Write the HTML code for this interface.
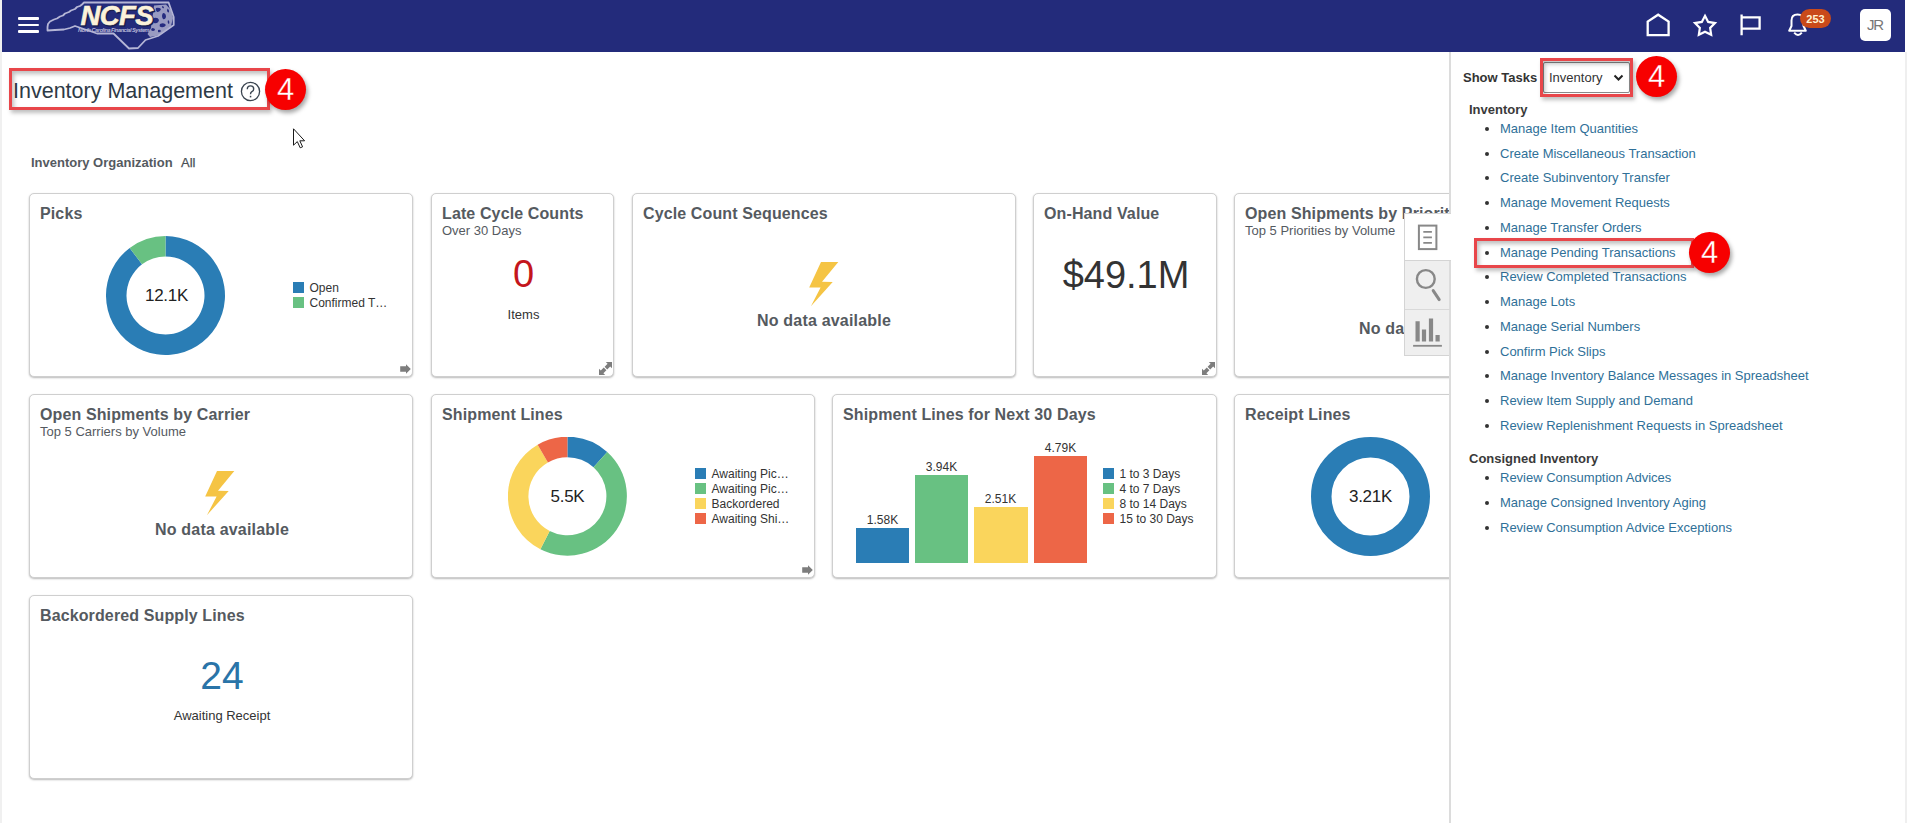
<!DOCTYPE html>
<html><head><meta charset="utf-8">
<style>
*{box-sizing:border-box;margin:0;padding:0}
html,body{width:1907px;height:823px;overflow:hidden;background:#fff;font-family:"Liberation Sans",sans-serif;color:#333}
.abs{position:absolute}
#lstrip{left:0;top:0;width:2px;height:823px;background:#f0f0f0}
#hdr{left:2px;top:0;width:1903px;height:52px;background:#232b7b}
.card{position:absolute;background:#fff;border:1px solid #cfcfcf;border-radius:5px;box-shadow:0 1px 2px rgba(0,0,0,.28)}
.ttl{position:absolute;left:10px;top:11px;font-size:16px;font-weight:bold;color:#555a5f;white-space:nowrap;letter-spacing:0.12px}
.sub{position:absolute;left:10px;top:29px;font-size:13px;color:#555a5f;white-space:nowrap}
.nodata{position:absolute;font-size:16px;font-weight:bold;color:#555a5f;white-space:nowrap;letter-spacing:0.2px}
.leg{position:absolute;font-size:12px;color:#333;white-space:nowrap;line-height:15px}
.leg i{display:inline-block;width:11px;height:11px;vertical-align:-1px;margin-right:5.5px}
.redbox{position:absolute;border:3px solid #e8464a;box-shadow:inset 2px 3px 4px rgba(0,0,0,.25),2px 3px 4px rgba(0,0,0,.25)}
.badge4{position:absolute;width:41px;height:41px;border-radius:50%;background:#f70000;color:#fff;font-size:31px;-webkit-text-stroke:0.3px #f70000;text-align:center;line-height:41px;box-shadow:2px 3px 4px rgba(0,0,0,.35)}
#panel{left:1449px;top:52px;width:458px;height:771px;background:#fff;border-left:2px solid #dcdcdc;border-right:2px solid #efefef}
.lnk{position:absolute;left:1500px;font-size:13px;color:#2f7098;white-space:nowrap}
.bul{position:absolute;left:1485px;width:4px;height:4px;border-radius:50%;background:#333}
.grp{position:absolute;left:1469px;font-size:13px;font-weight:bold;color:#3a3a3a;white-space:nowrap}
</style></head>
<body>
<div id="lstrip" class="abs"></div>
<div id="hdr" class="abs"></div>

<!-- header content -->
<div class="abs" style="left:17.5px;top:17px;width:21px;height:2.8px;background:#fff;border-radius:1px"></div>
<div class="abs" style="left:17.5px;top:23.7px;width:21px;height:2.6px;background:#fff;border-radius:1px"></div>
<div class="abs" style="left:17.5px;top:30px;width:21px;height:2.8px;background:#fff;border-radius:1px"></div>
<svg class="abs" style="left:40px;top:0px" width="140" height="52" viewBox="0 0 140 52">
  <path d="M44 2.5 L128.6 2.5 L133.7 17 L133.7 25 L118 36 L105.5 40 L98 48 L89 48.5 L73.5 33.5 L57 33.5 L35 26 L30 28 L24 29.5 L15 30 L7.5 30.5 L7.5 27 L8 24 L10 21.5 L14 19.5 L17 18.5 L20 16.5 L23 15.5 L25 13.5 L29 12 L31 10.5 L35 9 L37 7 L40 6 L42 4.5 Z" fill="none" stroke="#b5b6d6" stroke-width="1.8" stroke-linejoin="round"/>
  <path d="M114 5.5 L126 4.5 L131 10 L133 18 L131 26 L125 31 L118 35.5 L110 37 L107.5 34 L111 28 L111.5 21 L113 14 Z" fill="#aeafcf" opacity="0.85"/>
  <g fill="#262c80">
    <path d="M116 8 q3 -1 5 1 q-1 3 -4 3 q-2 -2 -1 -4Z"/><path d="M123 13 q3 0 3 4 q-1 3 -3 2 q-2 -3 0 -6Z"/><path d="M114 18 q4 -1 5 2 q-1 4 -5 3 q-2 -3 0 -5Z"/>
    <path d="M120 24 q4 -2 6 1 q-2 3 -5 2 q-2 0 -1 -3Z"/><path d="M112 28 q3 0 3 2 q-2 2 -4 0Z"/><path d="M127.5 8.5 q2 1 1.5 4 q-2 0 -2 -2Z"/>
    <path d="M128 20 q2 1 1 4 q-2 -1 -1 -4Z"/><path d="M118 30 q2 -1 3 1 q-1 2 -3 1Z"/><path d="M122 6 q2 0 2 2 q-2 1 -2 -2Z"/>
  </g>
  <g font-family="Liberation Sans" font-weight="bold" font-style="italic" font-size="27.5" letter-spacing="-0.6">
  <text x="40.5" y="25" fill="#1c2050" stroke="#1c2050" stroke-width="1.4" transform="translate(1.2,1.2)">NCFS</text>
  <text x="40.5" y="25" fill="#fbf2da" stroke="#fbf2da" stroke-width="0.6">NCFS</text>
  </g>
  <text x="38" y="31.6" font-family="Liberation Sans" font-weight="bold" font-style="italic" font-size="5.6" fill="#b9bad9" textLength="71.5">North Carolina Financial System</text>
</svg>
<!-- right icons -->
<svg class="abs" style="left:1640px;top:8px" width="180" height="36" viewBox="0 0 180 36">
  <path d="M7.7 27.2 L7.7 13.5 L18.15 6.7 L28.6 13.5 L28.6 27.2 Z" fill="none" stroke="#fff" stroke-width="2.3" stroke-linejoin="miter"/>
  <path d="M65.00 7.80 L68.17 13.93 L74.99 15.06 L70.14 19.97 L71.17 26.79 L65.00 23.70 L58.83 26.79 L59.86 19.97 L55.01 15.06 L61.83 13.93 Z" fill="none" stroke="#fff" stroke-width="2.2" stroke-linejoin="miter"/>
  <path d="M101.6 27.3 L101.6 6.5 M101.6 9.3 L119.6 9.3 L119.6 20.7 L101.6 20.7" fill="none" stroke="#fff" stroke-width="2.3"/>
  <path d="M149.2 22.8 L151.5 18 L151.5 12.5 Q151.5 6.4 157.5 6.4 Q163.5 6.4 163.5 12.5 L163.5 18 L165.8 22.8 Z" fill="none" stroke="#fff" stroke-width="2" stroke-linejoin="round"/>
  <path d="M154.2 24.6 Q158 29.2 161.8 24.6" fill="none" stroke="#fff" stroke-width="2"/>
</svg>
<div class="abs" style="left:1800px;top:9px;width:31px;height:19px;border-radius:10px;background:#c94a1a;color:#fff3d2;font-size:11px;font-weight:bold;text-align:center;line-height:20px">253</div>
<div class="abs" style="left:1860px;top:9px;width:31px;height:32px;border-radius:5px;background:#fff;color:#777;font-size:15px;letter-spacing:-1.2px;text-indent:-1px;text-align:center;line-height:31px">JR</div>

<!-- title -->
<div class="abs" style="left:13px;top:79px;font-size:21.5px;color:#2e3a46;white-space:nowrap">Inventory Management</div>
<svg class="abs" style="left:240px;top:81px" width="21" height="21" viewBox="0 0 21 21"><circle cx="10.5" cy="10.5" r="9.1" fill="none" stroke="#3a4450" stroke-width="1.3"/><path d="M7.3 8.2 Q7.3 4.9 10.5 4.9 Q13.7 4.9 13.7 7.9 Q13.7 9.6 11.9 10.6 Q10.5 11.4 10.5 13.2" fill="none" stroke="#3a4450" stroke-width="1.4"/><rect x="9.8" y="14.8" width="1.5" height="1.6" fill="#3a4450"/></svg>
<div class="redbox" style="left:9px;top:68px;width:261px;height:42px"></div>
<div class="badge4" style="left:265px;top:69px">4</div>
<svg class="abs" style="left:292px;top:128px" width="14" height="22" viewBox="0 0 14 22"><path d="M1.5 0.8 L1.5 17.2 L5.3 13.6 L8.2 19.8 L10.6 18.8 L7.8 12.8 L12.6 12.8 Z" fill="#fff" stroke="#1a1a1a" stroke-width="1" stroke-linejoin="miter"/></svg>

<div class="abs" style="left:31px;top:155px;font-size:13px;font-weight:bold;color:#555a5f;white-space:nowrap">Inventory Organization</div>
<div class="abs" style="left:181px;top:155px;font-size:13px;color:#4a4f55;-webkit-text-stroke:0.25px #4a4f55">All</div>

<div class="card" style="left:29px;top:193px;width:384px;height:184px">
<div class="ttl">Picks</div>
<svg class="abs" style="left:76px;top:42px" width="120" height="120" viewBox="76 42 120 120"><path d="M135.50 42.00 A59.5 59.5 0 1 1 99.69 53.98 L112.03 70.35 A39 39 0 1 0 135.50 62.50 Z" fill="#2a7db5"/><path d="M99.69 53.98 A59.5 59.5 0 0 1 135.50 42.00 L135.50 62.50 A39 39 0 0 0 112.03 70.35 Z" fill="#68c182"/></svg>
<div class="abs" style="left:106px;top:92px;width:61px;text-align:center;font-size:17px;letter-spacing:-0.3px;color:#222">12.1K</div>
<div class="leg" style="left:263px;top:87px"><i style="background:#2a7db5"></i>Open<br><i style="background:#68c182"></i>Confirmed T…</div>
<svg class="abs" style="right:1px;bottom:2px" width="11" height="10" viewBox="0 0 11 10"><path d="M0.2 2.2 L6 2.2 L6 0.2 L10.8 5 L6 9.8 L6 7.8 L0.2 7.8 Z" fill="#7d7d7d"/></svg>
</div>
<div class="card" style="left:431px;top:193px;width:183px;height:184px">
<div class="ttl">Late Cycle Counts</div>
<div class="sub">Over 30 Days</div>
<div class="abs" style="left:0;top:59px;width:183px;text-align:center;font-size:38px;color:#c4161c">0</div>
<div class="abs" style="left:0;top:113px;width:183px;text-align:center;font-size:13px;color:#333">Items</div>
<svg class="abs" style="right:1px;bottom:1px" width="13" height="13" viewBox="0 0 13 13"><path d="M13 0 H6.8 L8.6 1.8 L5.6 4.8 L8.2 7.4 L11.2 4.4 L13 6.2 Z M0 13 H6.2 L4.4 11.2 L7.4 8.2 L4.8 5.6 L1.8 8.6 L0 6.8 Z" fill="#7d7d7d"/></svg>
</div>
<div class="card" style="left:632px;top:193px;width:384px;height:184px">
<div class="ttl">Cycle Count Sequences</div>
<svg class="abs" style="left:175px;top:67px" width="32" height="47" viewBox="0 0 32 47"><path d="M13 0.9 L30.3 0.9 L14 20.7 L24.7 21 L2.9 45.2 L12.6 26.5 L1.2 26.5 Z" fill="#f5c444"/></svg>
<div class="nodata" style="left:-1px;top:118px;width:384px;text-align:center">No data available</div>
</div>
<div class="card" style="left:1033px;top:193px;width:184px;height:184px">
<div class="ttl">On-Hand Value</div>
<div class="abs" style="left:0;top:60px;width:184px;text-align:center;font-size:38px;color:#333">$49.1M</div>
<svg class="abs" style="right:1px;bottom:1px" width="13" height="13" viewBox="0 0 13 13"><path d="M13 0 H6.8 L8.6 1.8 L5.6 4.8 L8.2 7.4 L11.2 4.4 L13 6.2 Z M0 13 H6.2 L4.4 11.2 L7.4 8.2 L4.8 5.6 L1.8 8.6 L0 6.8 Z" fill="#7d7d7d"/></svg>
</div>
<div class="card" style="left:1234px;top:193px;width:384px;height:184px">
<div class="ttl">Open Shipments by Priority</div>
<div class="sub">Top 5 Priorities by Volume</div>
<div class="nodata" style="left:-1px;top:126px;width:384px;text-align:center">No data available</div>
</div>
<div class="card" style="left:29px;top:394px;width:384px;height:184px">
<div class="ttl">Open Shipments by Carrier</div>
<div class="sub">Top 5 Carriers by Volume</div>
<svg class="abs" style="left:174px;top:75px" width="32" height="47" viewBox="0 0 32 47"><path d="M13 0.9 L30.3 0.9 L14 20.7 L24.7 21 L2.9 45.2 L12.6 26.5 L1.2 26.5 Z" fill="#f5c444"/></svg>
<div class="nodata" style="left:0;top:126px;width:384px;text-align:center">No data available</div>
</div>
<div class="card" style="left:431px;top:394px;width:384px;height:184px">
<div class="ttl">Shipment Lines</div>
<svg class="abs" style="left:76px;top:42px" width="120" height="120" viewBox="76 42 120 120"><path d="M135.40 41.70 A59.5 59.5 0 0 1 175.21 56.98 L161.50 72.22 A39 39 0 0 0 135.40 62.20 Z" fill="#2a7db5"/><path d="M175.21 56.98 A59.5 59.5 0 0 1 108.39 154.21 L117.69 135.95 A39 39 0 0 0 161.50 72.22 Z" fill="#68c182"/><path d="M108.39 154.21 A59.5 59.5 0 0 1 105.65 49.67 L115.90 67.43 A39 39 0 0 0 117.69 135.95 Z" fill="#fad55c"/><path d="M105.65 49.67 A59.5 59.5 0 0 1 135.40 41.70 L135.40 62.20 A39 39 0 0 0 115.90 67.43 Z" fill="#ed6647"/></svg>
<div class="abs" style="left:105px;top:92px;width:61px;text-align:center;font-size:17px;letter-spacing:-0.3px;color:#222">5.5K</div>
<div class="leg" style="left:263px;top:72px"><i style="background:#2a7db5"></i>Awaiting Pic…<br><i style="background:#68c182"></i>Awaiting Pic…<br><i style="background:#fad55c"></i>Backordered<br><i style="background:#ed6647"></i>Awaiting Shi…</div>
<svg class="abs" style="right:1px;bottom:2px" width="11" height="10" viewBox="0 0 11 10"><path d="M0.2 2.2 L6 2.2 L6 0.2 L10.8 5 L6 9.8 L6 7.8 L0.2 7.8 Z" fill="#7d7d7d"/></svg>
</div>
<div class="card" style="left:832px;top:394px;width:385px;height:184px">
<div class="ttl">Shipment Lines for Next 30 Days</div>
<div class="abs" style="left:23px;top:133px;width:53px;height:35px;background:#2a7db5"></div>
<div class="abs" style="left:82px;top:80px;width:53px;height:88px;background:#68c182"></div>
<div class="abs" style="left:141px;top:112px;width:54px;height:56px;background:#fad55c"></div>
<div class="abs" style="left:201px;top:61px;width:53px;height:107px;background:#ed6647"></div>
<div class="abs" style="left:13px;top:118px;width:73px;text-align:center;font-size:12px;color:#333">1.58K</div>
<div class="abs" style="left:72px;top:65px;width:73px;text-align:center;font-size:12px;color:#333">3.94K</div>
<div class="abs" style="left:131px;top:97px;width:73px;text-align:center;font-size:12px;color:#333">2.51K</div>
<div class="abs" style="left:191px;top:46px;width:73px;text-align:center;font-size:12px;color:#333">4.79K</div>
<div class="leg" style="left:270px;top:72px"><i style="background:#2a7db5"></i>1 to 3 Days<br><i style="background:#68c182"></i>4 to 7 Days<br><i style="background:#fad55c"></i>8 to 14 Days<br><i style="background:#ed6647"></i>15 to 30 Days</div>
</div>
<div class="card" style="left:1234px;top:394px;width:384px;height:184px">
<div class="ttl">Receipt Lines</div>
<svg class="abs" style="left:76px;top:42px" width="120" height="120" viewBox="76 42 120 120"><circle cx="135.5" cy="101.5" r="49.25" fill="none" stroke="#2a7db5" stroke-width="20.5"/></svg>
<div class="abs" style="left:105px;top:92px;width:61px;text-align:center;font-size:17px;letter-spacing:-0.3px;color:#222">3.21K</div>
</div>
<div class="card" style="left:29px;top:595px;width:384px;height:184px">
<div class="ttl">Backordered Supply Lines</div>
<div class="abs" style="left:0;top:58px;width:384px;text-align:center;font-size:39px;color:#2a74a8">24</div>
<div class="abs" style="left:0;top:112px;width:384px;text-align:center;font-size:13px;color:#333">Awaiting Receipt</div>
</div>

<div id="panel" class="abs"></div>
<div class="abs" style="left:1404px;top:213px;width:47px;height:143px;border:1px solid #d4d4d4;border-right:none;background:#efefef">
<div class="abs" style="left:0;top:0;width:46px;height:47px;background:#fff;border-bottom:1px solid #d4d4d4"></div><div class="abs" style="left:44px;top:47px;width:2px;height:95px;background:#dcdcdc"></div>
<div class="abs" style="left:0;top:95px;width:45px;height:1px;background:#d9d9d9"></div>
<svg class="abs" style="left:0;top:0" width="46" height="143" viewBox="0 -2 46 143">
<rect x="13.9" y="9.6" width="17.5" height="23.5" fill="none" stroke="#888" stroke-width="2"/>
<path d="M18.3 15.9 H26.9 M18.3 21.3 H26.9 M18.3 26.8 H26.9" stroke="#888" stroke-width="1.8"/>
<circle cx="20.8" cy="63" r="8.9" fill="none" stroke="#888" stroke-width="2.4"/>
<path d="M28.2 74.6 L34.2 83.6" stroke="#888" stroke-width="3" stroke-linecap="round"/>
<path d="M12.6 105.2 V125.6 M19 113.4 V125.6 M26 102.5 V125.6 M32.6 118.9 V125.6" stroke="#888" stroke-width="4.2"/>
<path d="M8.1 129.8 H36.9" stroke="#888" stroke-width="1.8"/>
</svg></div>
<div class="abs" style="left:1463px;top:70px;font-size:13px;font-weight:bold;color:#333;white-space:nowrap">Show Tasks</div>
<div class="abs" style="left:1543px;top:62px;width:87px;height:31px;border:1px solid #8a8a8a;border-radius:2px;background:#fff"></div>
<div class="abs" style="left:1549px;top:70px;font-size:13px;color:#333">Inventory</div>
<svg class="abs" style="left:1613px;top:74px" width="11" height="8" viewBox="0 0 11 8"><path d="M1.5 1.5 L5.5 5.5 L9.5 1.5" fill="none" stroke="#222" stroke-width="2"/></svg>
<div class="grp" style="top:102px">Inventory</div>
<div class="bul" style="top:127px"></div><div class="lnk" style="top:121px">Manage Item Quantities</div>
<div class="bul" style="top:152px"></div><div class="lnk" style="top:146px">Create Miscellaneous Transaction</div>
<div class="bul" style="top:176px"></div><div class="lnk" style="top:170px">Create Subinventory Transfer</div>
<div class="bul" style="top:201px"></div><div class="lnk" style="top:195px">Manage Movement Requests</div>
<div class="bul" style="top:226px"></div><div class="lnk" style="top:220px">Manage Transfer Orders</div>
<div class="bul" style="top:251px"></div><div class="lnk" style="top:245px">Manage Pending Transactions</div>
<div class="bul" style="top:275px"></div><div class="lnk" style="top:269px">Review Completed Transactions</div>
<div class="bul" style="top:300px"></div><div class="lnk" style="top:294px">Manage Lots</div>
<div class="bul" style="top:325px"></div><div class="lnk" style="top:319px">Manage Serial Numbers</div>
<div class="bul" style="top:350px"></div><div class="lnk" style="top:344px">Confirm Pick Slips</div>
<div class="bul" style="top:374px"></div><div class="lnk" style="top:368px">Manage Inventory Balance Messages in Spreadsheet</div>
<div class="bul" style="top:399px"></div><div class="lnk" style="top:393px">Review Item Supply and Demand</div>
<div class="bul" style="top:424px"></div><div class="lnk" style="top:418px">Review Replenishment Requests in Spreadsheet</div>
<div class="grp" style="top:451px">Consigned Inventory</div>
<div class="bul" style="top:476px"></div><div class="lnk" style="top:470px">Review Consumption Advices</div>
<div class="bul" style="top:501px"></div><div class="lnk" style="top:495px">Manage Consigned Inventory Aging</div>
<div class="bul" style="top:526px"></div><div class="lnk" style="top:520px">Review Consumption Advice Exceptions</div>
<div class="redbox" style="left:1540px;top:58px;width:93px;height:39px"></div>
<div class="badge4" style="left:1636px;top:56px">4</div>
<div class="redbox" style="left:1474px;top:238px;width:220px;height:30px"></div>
<div class="badge4" style="left:1689px;top:232px">4</div>
</body></html>
